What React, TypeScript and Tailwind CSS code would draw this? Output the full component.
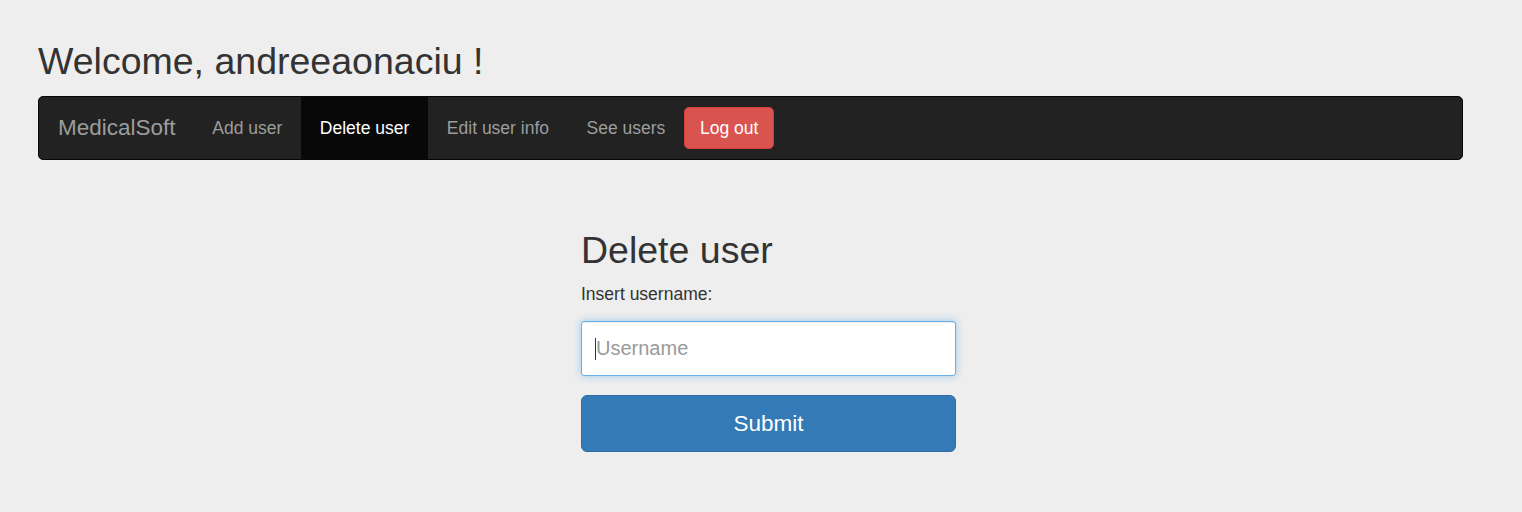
import React from 'react';

const navLinks = ['Add user', 'Delete user', 'Edit user info', 'See users'];

export default function App() {
  const active = 'Delete user';

  return (
    <div
      className="min-h-[512px] bg-[#eeeeee] text-[#333333]"
      style={{ fontFamily: '"Liberation Sans", Arial, Helvetica, sans-serif' }}
    >
      <div className="pl-[38px] pr-[59px] pt-[41px]">
        <h2 className="text-[37.5px] leading-[41px] mb-[14px] font-normal">Welcome, andreeaonaciu !</h2>

        <nav className="flex items-center h-[64px] bg-[#222222] border border-[#080808] rounded-[5px]">
          <a className="pl-[19px] pr-[18px] text-[22.5px] leading-[62px] text-[#9d9d9d]">MedicalSoft</a>
          <ul className="flex h-full">
            {navLinks.map((link) => (
              <li key={link}>
                <a
                  className={`block px-[18.75px] text-[17.5px] leading-[62px] ${
                    link === active ? 'bg-[#080808] text-white' : 'text-[#9d9d9d]'
                  }`}
                >
                  {link}
                </a>
              </li>
            ))}
          </ul>
          <button className="h-[42px] px-[15px] text-[17.5px] text-white bg-[#d9534f] border border-[#d43f3a] rounded-[5px]">
            Log out
          </button>
        </nav>
      </div>

      <div className="pl-[581px] pt-[70px] pb-[60px]">
        <div className="w-[375px]">
          <h2 className="text-[37.5px] leading-[41px] mb-[11px] font-normal">Delete user</h2>
          <label className="block text-[17.5px] leading-[25px] mb-[14px]">Insert username:</label>
          <div className="relative">
            <input
              type="text"
              placeholder="Username"
              className="block w-full h-[55px] px-[14px] text-[20px] bg-white border border-[#66afe9] rounded-[3px] outline-none placeholder:text-[#999999] shadow-[inset_0_1px_1px_rgba(0,0,0,0.075),0_0_8px_rgba(102,175,233,0.6)]"
            />
            <span className="absolute left-[14px] top-[17px] w-px h-[22px] bg-[#333333]" />
          </div>
          <button className="mt-[19px] w-full h-[57px] text-[22.5px] text-white bg-[#337ab7] border border-[#2e6da4] rounded-[6px]">
            Submit
          </button>
        </div>
      </div>
    </div>
  );
}
